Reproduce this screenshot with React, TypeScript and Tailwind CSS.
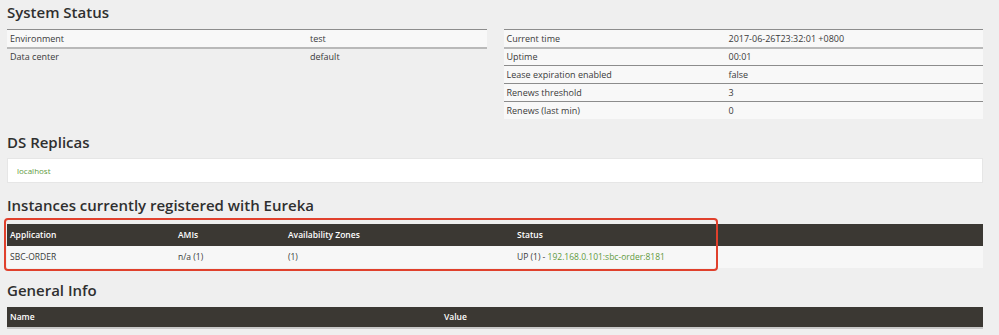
import React from "react";

const font = { fontFamily: '"Open Sans", "Liberation Sans", sans-serif' };

const leftRows: [string, string][] = [
  ["Environment", "test"],
  ["Data center", "default"],
];

const rightRows: [string, string][] = [
  ["Current time", "2017-06-26T23:32:01 +0800"],
  ["Uptime", "00:01"],
  ["Lease expiration enabled", "false"],
  ["Renews threshold", "3"],
  ["Renews (last min)", "0"],
];

function Heading({ children }: { children: React.ReactNode }) {
  return <h2 className="text-[15px] leading-[20px] font-semibold text-[#2f2f2f]">{children}</h2>;
}

function KvTable({ rows, valueX, allFilled }: { rows: [string, string][]; valueX: string; allFilled?: boolean }) {
  return (
    <div className="flex flex-col text-[9px] text-[#3a3a3a]">
      {rows.map(([k, v], i) => (
        <div
          key={k}
          className={`flex items-center h-[18px] px-[3px] ${
            i === 1 ? "border-t-2 border-[#b9b9b9]" : "border-t border-[#8c8c8c]"
          } ${allFilled || i === 0 ? "bg-[#f8f8f8]" : ""}`}
        >
          <span className={valueX}>{k}</span>
          <span>{v}</span>
        </div>
      ))}
    </div>
  );
}

export default function App() {
  return (
    <div className="w-[999px] h-[335px] bg-[#efefef] overflow-hidden relative" style={font}>
      <div className="px-[7px] pt-[2px] w-[990px]">
        <Heading>System Status</Heading>
        <div className="grid grid-cols-2 gap-[17px] mt-[7px]">
          <KvTable rows={leftRows} valueX="w-[300px]" />
          <KvTable rows={rightRows} valueX="w-[222px]" allFilled />
        </div>

        <div className="mt-[13px]">
          <Heading>DS Replicas</Heading>
        </div>
        <div className="mt-[6px] h-[25px] bg-white border border-[#e6e6e6] flex items-center px-[9px] text-[8px] text-[#5f9a3e]">
          localhost
        </div>

        <div className="mt-[12px]">
          <Heading>Instances currently registered with Eureka</Heading>
        </div>
        <div className="mt-[9px] text-[8.5px]">
          <div className="flex items-center h-[22px] bg-[#3b3833] text-white font-semibold px-[3px]">
            <span className="w-[168px]">Application</span>
            <span className="w-[110px]">AMIs</span>
            <span className="w-[229px]">Availability Zones</span>
            <span>Status</span>
          </div>
          <div className="flex items-center h-[22px] bg-[#f7f7f7] text-[#3a3a3a] px-[3px]">
            <span className="w-[168px]">SBC-ORDER</span>
            <span className="w-[110px]">n/a (1)</span>
            <span className="w-[229px]">(1)</span>
            <span>
              UP (1) - <span className="text-[#5f9a3e]">192.168.0.101:sbc-order:8181</span>
            </span>
          </div>
        </div>

        <div className="mt-[12px]">
          <Heading>General Info</Heading>
        </div>
        <div className="mt-[7px] text-[8.5px]">
          <div className="flex items-center h-[22px] bg-[#3b3833] text-white font-semibold px-[3px] border-b-2 border-[#c9c9c9]">
            <span className="w-[434px]">Name</span>
            <span>Value</span>
          </div>
        </div>
      </div>

      <div className="absolute left-[4px] top-[218px] w-[714px] h-[53px] border-2 border-[#e0402c] rounded-[4px]" />
    </div>
  );
}
